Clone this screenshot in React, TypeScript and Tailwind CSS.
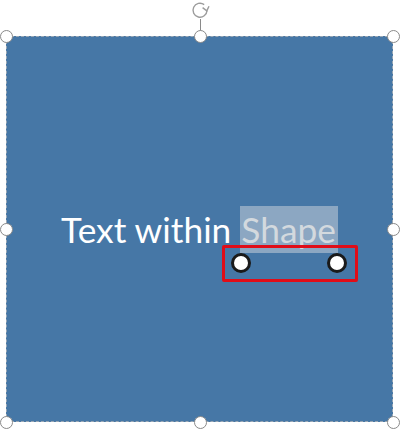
import React from 'react';

// resize handle on the shape's bounding box
const Handle: React.FC<{ x: number; y: number }> = ({ x, y }) => (
  <div
    className="absolute w-[13px] h-[13px] rounded-full bg-white border border-[#8a8a8a]"
    style={{ left: x - 6.5, top: y - 6.5 }}
  />
);

// text-selection handle (black ring)
const SelHandle: React.FC<{ x: number; y: number }> = ({ x, y }) => (
  <div
    className="absolute w-[20px] h-[20px] rounded-full bg-white border-[3px] border-[#1a1a1a]"
    style={{ left: x - 10, top: y - 10 }}
  />
);

export default function App() {
  const handles = [
    [6, 36], [200, 36], [393, 36],
    [6, 229], [393, 229],
    [6, 422], [200, 422], [393, 422],
  ];

  return (
    <div className="relative w-[400px] h-[430px] bg-white overflow-hidden">
      <div className="pt-[36px] pl-[6px]">
        <div className="w-[387px] h-[386px] bg-[#4677a6] border border-dashed border-[#9aa7b4] flex items-center justify-center">
          <p
            className="text-[35.3px] leading-[47px] text-white whitespace-nowrap flex items-center"
            style={{ fontFamily: 'Lato, "Open Sans", sans-serif' }}
          >
            <span>Text within&nbsp;</span>
            <span className="inline-block h-[47px] leading-[47px] bg-[#8ca7c2] text-[#d3d9de] pl-[1px] pr-[2px]">Shape</span>
          </p>
        </div>
      </div>

      {/* rotation handle */}
      <svg className="absolute left-[190px] top-0" width="20" height="21" viewBox="0 0 20 21" fill="none">
        <path d="M14.2 4.6 A7 7 0 1 0 17 10.5" stroke="#9c9c9c" strokeWidth="1.4" />
        <path d="M12.6 7.6 L16.8 10.8 L19 6.2" stroke="#9c9c9c" strokeWidth="1.4" />
      </svg>
      <div className="absolute left-[199.5px] top-[19px] w-px h-[12px] bg-[#8a8a8a]" />

      {handles.map(([x, y]) => (
        <Handle key={`${x}-${y}`} x={x} y={y} />
      ))}

      {/* highlight box */}
      <div className="absolute left-[222px] top-[245px] w-[136px] h-[37px] border-[3px] border-[#e00d18] rounded-[2px]" />
      <SelHandle x={241} y={263} />
      <SelHandle x={337} y={263} />
    </div>
  );
}
